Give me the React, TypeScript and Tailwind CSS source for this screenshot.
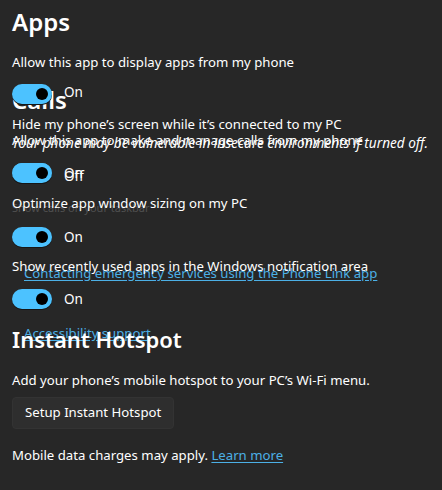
const font = { fontFamily: '"Segoe UI", "Noto Sans", sans-serif' };

const Toggle = ({ label, labelClass = '' }: { label: string; labelClass?: string }) => (
  <div className="flex items-center h-5">
    <div className="w-10 h-5 rounded-full bg-[#4cc2ff] flex items-center justify-end pr-1 shadow-[0_1px_0_#161616]">
      <div className="w-3 h-3 rounded-full bg-black" />
    </div>
    <span className={`ml-3 text-[13.5px] text-white ${labelClass}`}>{label}</span>
  </div>
);

const Line = ({ children, className = '' }: { children: React.ReactNode; className?: string }) => (
  <p className={`text-[13.2px] leading-5 text-white whitespace-nowrap ${className}`}>{children}</p>
);

const CallsLayer = () => (
  <div className="absolute inset-0 px-3">
    <h2 className="mt-[84px] text-[24px] leading-8 font-semibold text-white">Calls</h2>
    <Line className="mt-[14px]">Allow this app to make and manage calls from my phone</Line>
    <div className="mt-[13px]">
      <Toggle label="On" />
    </div>
    <p className="mt-[17px] text-[11px] leading-4 text-[#505050]">Show calls on your taskbar</p>
    <Line className="mt-[47px] ml-3">
      <a className="text-[#4cb0e6] underline underline-offset-2">Contacting emergency services using the Phone Link app</a>
    </Line>
    <Line className="mt-[40px] ml-3">
      <a className="text-[#4cb0e6] underline underline-offset-2">Accessibility support</a>
    </Line>
  </div>
);

const App = () => (
  <div className="min-h-screen bg-[#272727]" style={font}>
    <div className="relative h-[490px] overflow-hidden">
      <CallsLayer />
      <div className="relative px-3">
        <h2 className="pt-[6px] text-[24px] leading-8 font-semibold text-white">Apps</h2>
        <Line className="mt-[14px]">Allow this app to display apps from my phone</Line>
        <div className="mt-[12px]">
          <Toggle label="On" labelClass="text-[12.5px] -translate-y-[2px]" />
        </div>
        <Line className="mt-[10px]">Hide my phone’s screen while it’s connected to my PC</Line>
        <p className="text-[13.6px] leading-[18px] italic text-white whitespace-nowrap">
          Your phone may be vulnerable in insecure environments if turned off.
        </p>
        <div className="mt-[11px]">
          <Toggle label="Off" labelClass="translate-y-[3px]" />
        </div>
        <Line className="mt-[10px]">Optimize app window sizing on my PC</Line>
        <div className="mt-[14px]">
          <Toggle label="On" />
        </div>
        <Line className="mt-[9px]">Show recently used apps in the Windows notification area</Line>
        <div className="mt-[13px]">
          <Toggle label="On" />
        </div>
        <h2 className="mt-[14px] text-[22px] leading-8 font-semibold text-white">Instant Hotspot</h2>
        <Line className="mt-[15px]">Add your phone’s mobile hotspot to your PC’s Wi-Fi menu.</Line>
        <button className="mt-[7px] h-8 px-3 rounded bg-[#2e2e2e] border border-[#333] text-[13.2px] text-white">
          Setup Instant Hotspot
        </button>
        <Line className="mt-[16px]">
          Mobile data charges may apply.{' '}
          <a className="text-[#4cb0e6] underline underline-offset-2">Learn more</a>
        </Line>
      </div>
    </div>
  </div>
);

export default App;
